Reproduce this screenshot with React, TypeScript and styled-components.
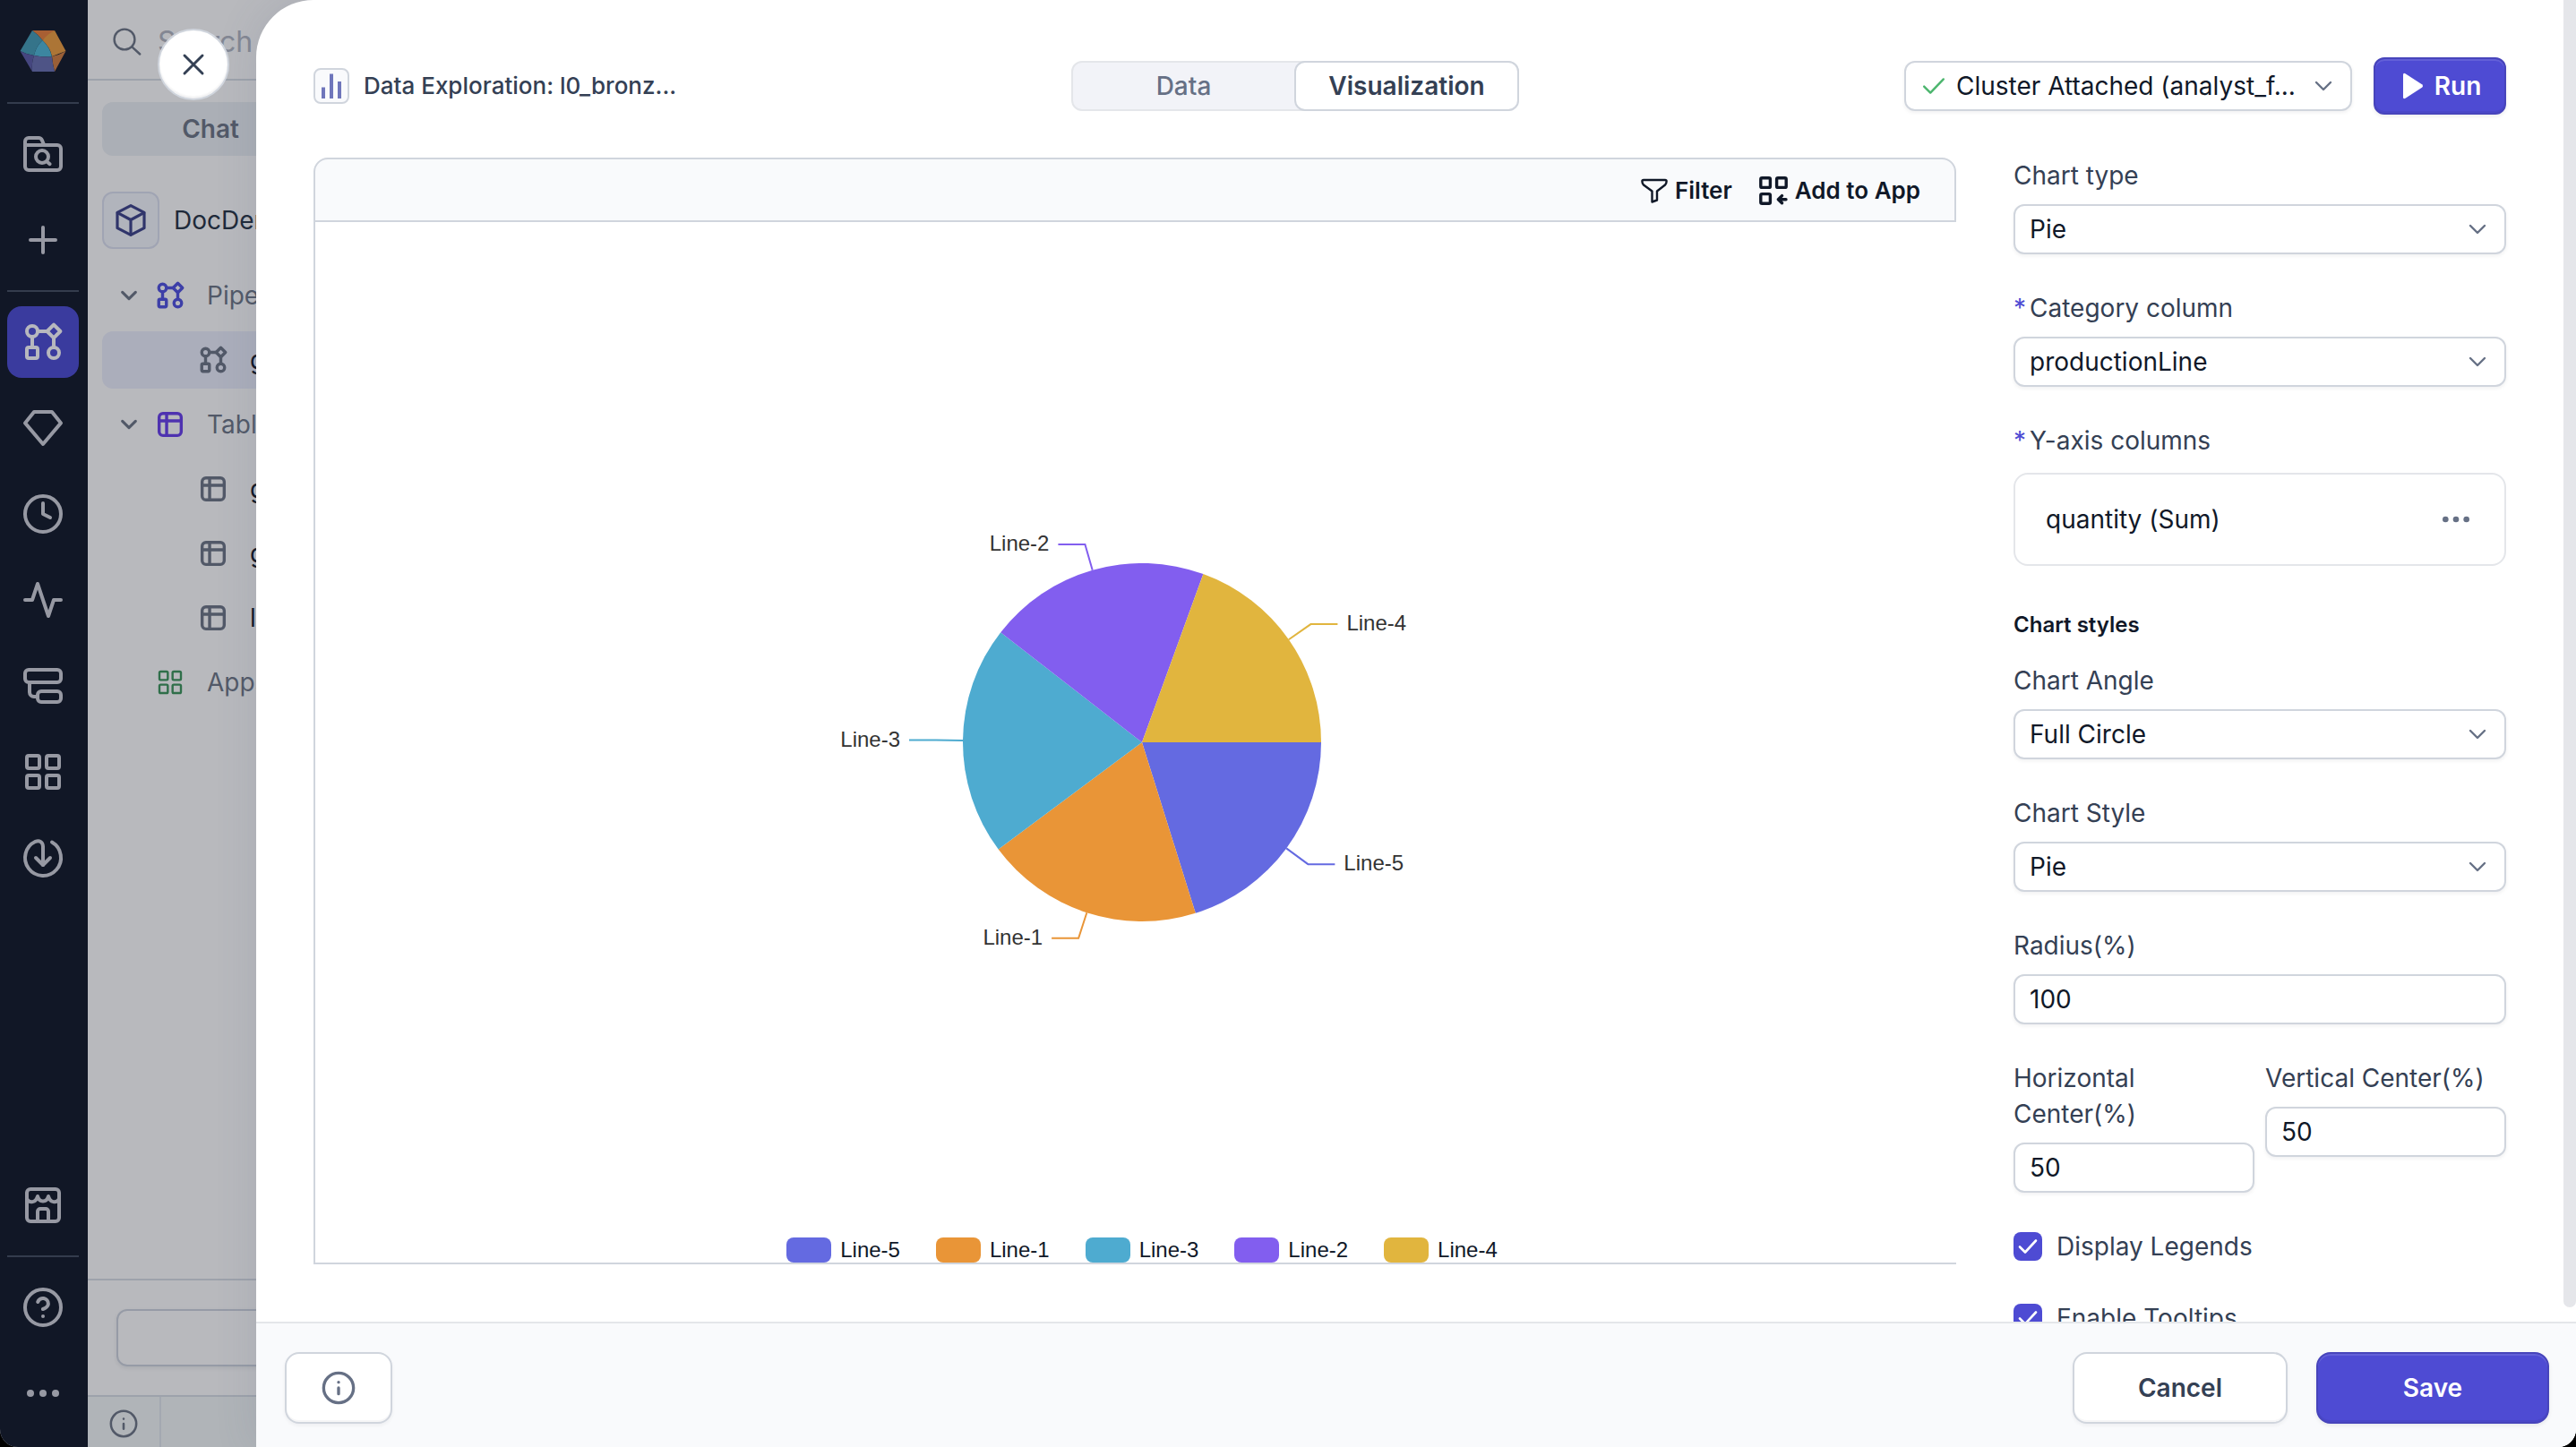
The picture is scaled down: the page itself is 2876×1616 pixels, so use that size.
import React, { useId } from "react";
import styled, { createGlobalStyle, css } from "styled-components";

const color = {
  primary: "#4e4bd3",
  ink: "#101828",
  text: "#344054",
  muted: "#667085",
  border: "#d0d5dd",
  line: "#e4e6ea",
  surface: "#f9fafc",
  rail: "#111726",
  railIcon: "#9799a3",
  railActive: "#3a3b9e",
  shade: "#b8b9bd",
  shadeLine: "#9da2ab",
  shadeText: "#525968",
};

const Global = createGlobalStyle`
  * { box-sizing: border-box; }
  html, body, #root { height: 100%; }
  body { margin: 0; background: #000; overflow: hidden; font-family: Inter, "Liberation Sans", sans-serif; font-size: 28px; line-height: 40px; color: ${color.ink}; }
  button, input, select { font: inherit; color: inherit; margin: 0; }
  ul { list-style: none; margin: 0; padding: 0; }
`;

/* ---------- icons ---------- */

interface IconProps {
  size?: number;
  stroke?: number;
}

const Icon = ({ size = 48, stroke = 2, children }: IconProps & { children: React.ReactNode }) => (
  <svg
    width={size}
    height={size}
    viewBox="0 0 24 24"
    fill="none"
    stroke="currentColor"
    strokeWidth={stroke}
    strokeLinecap="round"
    strokeLinejoin="round"
    aria-hidden="true"
  >
    {children}
  </svg>
);

const Logo = () => (
  <svg width="52" height="46" viewBox="22 33 52 46" aria-hidden="true">
    <path d="M36 33H61L47.5 44Q42 37 36 33Z" fill="#a85f33" />
    <path d="M61 33L73.5 56L58 62Q56 52 47.5 44Q53 37 61 33Z" fill="#ac7536" />
    <path d="M73.5 56L61 79Q59 72 58 62Q67 60 73.5 56Z" fill="#995f37" />
    <path d="M36 33Q42 37 47.5 44Q40 51 38 61Q30 60 22.5 56Z" fill="#35748a" />
    <path d="M47.5 44Q56 52 58 62.500Q48 63 38 61Q40 51 47.5 44Z" fill="#3c86a0" />
    <path d="M22.500 56Q30 60 38 61Q35 70 36 79Z" fill="#45467f" />
    <path d="M38 61Q48 63 58 62.500Q59 72 61 79H36Q35 70 38 61Z" fill="#4e5486" />
  </svg>
);

const FolderSearchIcon = () => (
  <Icon>
    <path d="M2 7h18a2 2 0 0 1 2 2v10a2 2 0 0 1-2 2H4a2 2 0 0 1-2-2V5a2 2 0 0 1 2-2h5.500a2 2 0 0 1 1.900 1.200L12.600 7" />
    <circle cx="11.500" cy="13.500" r="3.500" />
    <path d="M14.200 16.200L15.800 17.600" />
  </Icon>
);
const PlusIcon = () => (
  <Icon>
    <path d="M12 5v14M5 12h14" />
  </Icon>
);
const FlowIcon = (p: IconProps) => (
  <Icon {...p}>
    <circle cx="6" cy="6" r="3" />
    <path d="M18 2.300L21.700 6L18 9.700L14.300 6Z" />
    <rect x="3" y="15" width="6" height="6" rx="1" />
    <circle cx="18" cy="18" r="3" />
    <path d="M9 6h5.300M6 9v6M18 9.700V15" />
  </Icon>
);
const GemIcon = () => (
  <Icon>
    <path d="M7 3h10l5 6.200L12 21L2 9.200Z" />
  </Icon>
);
const ClockIcon = () => (
  <Icon>
    <circle cx="12" cy="12" r="10" />
    <path d="M12 6v6l4 2" />
  </Icon>
);
const ActivityIcon = () => (
  <Icon>
    <path d="M2 12h4L9 3l6 18 3-9h4" />
  </Icon>
);
const StackIcon = () => (
  <Icon>
    <rect x="2" y="3" width="20" height="7" rx="2" />
    <rect x="9" y="15" width="13" height="6" rx="2" />
    <path d="M4.500 10v5.500a2.500 2.500 0 0 0 2.500 2.500h2" />
  </Icon>
);
const GridIcon = (p: IconProps) => (
  <Icon {...p}>
    <rect x="3" y="3" width="7" height="7" rx="1" />
    <rect x="14" y="3" width="7" height="7" rx="1" />
    <rect x="3" y="14" width="7" height="7" rx="1" />
    <rect x="14" y="14" width="7" height="7" rx="1" />
  </Icon>
);
const IngestIcon = () => (
  <Icon>
    <path d="M17 3.300A10 10 0 1 1 7.800 2.900C10 2 12 3.200 12 5.800V16" />
    <path d="M8 12l4 4 4-4" />
  </Icon>
);
const StoreIcon = () => (
  <Icon>
    <rect x="3" y="3" width="18" height="18" rx="2" />
    <path d="M3 8.500c1.500 2.500 5 2.200 6-1.500c1 3.700 5 3.700 6 0c1 3.700 4.500 4 6 1.500" />
    <path d="M9 21v-5.500a1.500 1.500 0 0 1 1.500-1.500h3a1.500 1.500 0 0 1 1.500 1.500V21" />
  </Icon>
);
const HelpIcon = () => (
  <Icon>
    <circle cx="12" cy="12" r="10" />
    <path d="M9.100 9a3 3 0 0 1 5.830 1c0 2-3 3-3 3M12 17h.01" />
  </Icon>
);
const DotsIcon = ({ size = 48 }: IconProps) => (
  <svg width={size} height={size} viewBox="0 0 24 24" fill="currentColor" aria-hidden="true">
    <circle cx="5" cy="12" r="2" />
    <circle cx="12" cy="12" r="2" />
    <circle cx="19" cy="12" r="2" />
  </svg>
);
const TableIcon = () => (
  <Icon size={34} stroke={2.4}>
    <rect x="3.300" y="3.300" width="17.400" height="17.400" rx="3" />
    <path d="M9.200 3.500v17M3.500 9.200h17" />
  </Icon>
);
const ChevronIcon = (p: IconProps) => (
  <Icon size={24} stroke={2.4} {...p}>
    <path d="M4 8l8 8 8-8" />
  </Icon>
);
const SearchIcon = () => (
  <Icon size={36} stroke={1.6}>
    <circle cx="10" cy="10" r="7.600" />
    <path d="M15.600 15.600L21.500 21" />
  </Icon>
);
const CubeIcon = () => (
  <Icon size={40} stroke={1.9}>
    <path d="M12 2.200L21 6.800V17.200L12 21.800L3 17.200V6.800Z" />
    <path d="M3.200 7L12 11.700L20.800 7M12 11.700V21.600" />
  </Icon>
);
const InfoIcon = ({ size = 40, stroke = 2 }: IconProps) => (
  <Icon size={size} stroke={stroke}>
    <circle cx="12" cy="12" r="10" />
    <path d="M12 12v4M12 8.200h.01" />
  </Icon>
);
const CloseIcon = () => (
  <Icon size={32} stroke={2.2}>
    <path d="M4.500 4.500l15 15M19.500 4.500l-15 15" />
  </Icon>
);
const BarsIcon = () => (
  <svg width="24" height="28" viewBox="0 0 24 28" stroke="#6f76bb" strokeWidth="4" aria-hidden="true">
    <path d="M3 15.500V28M12 .5V28M21 9V28" />
  </svg>
);
const CheckIcon = () => (
  <Icon size={26} stroke={2.2}>
    <path d="M2 12.500L8.500 19L22 5" />
  </Icon>
);
const PlayIcon = () => (
  <svg width="24" height="30" viewBox="0 0 24 30" fill="#fff" aria-hidden="true">
    <path d="M1 2.500Q1 0 3.500 1.200L22 13.200Q24 15 22 16.800L3.500 28.800Q1 30 1 27.500Z" />
  </svg>
);
const FilterIcon = () => (
  <svg width="30" height="28" viewBox="0 0 30 28" fill="none" stroke="currentColor" strokeWidth="2.400" strokeLinejoin="round" aria-hidden="true">
    <path d="M3 2H27Q28.600 2 28.600 3.600Q28.600 6 27 7.500L18 14.500V24.500L12.500 26.500V14.500L3 7.500Q1.400 6 1.400 3.600Q1.400 2 3 2Z" />
  </svg>
);
const AddToAppIcon = () => (
  <svg width="32" height="32" viewBox="0 0 32 32" fill="none" stroke="currentColor" strokeWidth="3.400" strokeLinecap="round" strokeLinejoin="round" aria-hidden="true">
    <rect x="1.800" y="1.800" width="10.600" height="10.600" rx="1.500" />
    <rect x="19.600" y="1.800" width="10.600" height="10.600" rx="1.500" />
    <rect x="1.800" y="19.600" width="10.600" height="10.600" rx="1.500" />
    <path d="M30 25.700H22M25.500 21.600L21.400 25.700L25.500 29.800" />
  </svg>
);

/* ---------- page behind the drawer ---------- */

const Page = styled.div`
  position: relative;
  display: flex;
  height: 100vh;
  overflow: hidden;
  border-radius: 0 0 20px 20px;
  background: ${color.shade};
`;

const Rail = styled.nav`
  display: flex;
  flex-direction: column;
  gap: 16px;
  width: 98px;
  padding: 16px 10px 20px 8px;
  background: ${color.rail};
`;
const LogoLink = styled.a`
  display: grid;
  place-items: center;
  height: 82px;
`;
const RailLine = styled.hr`
  width: 100%;
  height: 2px;
  margin: 0;
  border: 0;
  background: #343c4d;
`;
const RailButton = styled.button<{ $active?: boolean }>`
  display: grid;
  place-items: center;
  height: 80px;
  padding: 0;
  border: 0;
  border-radius: 16px;
  color: ${(p) => (p.$active ? "#b7b8be" : color.railIcon)};
  background: ${(p) => (p.$active ? color.railActive : "transparent")};
`;
const Spacer = styled.div`
  flex: 1;
`;

const Browser = styled.aside`
  display: flex;
  flex-direction: column;
  width: 516px;
`;
const SearchBar = styled.label`
  display: flex;
  align-items: center;
  gap: 16px;
  height: 90px;
  padding: 6px 26px 0;
  border-bottom: 2px solid ${color.shadeLine};
  color: ${color.shadeText};
`;
const SearchInput = styled.input`
  flex: 1;
  min-width: 0;
  padding: 0;
  border: 0;
  background: none;
  font-size: 32px;
  &::placeholder {
    color: #838793;
    opacity: 1;
  }
`;
const ModeTabs = styled.div`
  display: flex;
  margin: 24px 16px 0;
  border-radius: 12px;
  background: #abafb6;
`;
const ModeTab = styled.button`
  width: 50%;
  height: 60px;
  border: 0;
  background: none;
  color: ${color.shadeText};
  font-weight: 600;
`;
const Project = styled.div`
  display: flex;
  align-items: center;
  gap: 16px;
  margin: 40px 16px 20px;
  color: #1f2a3a;
`;
const ProjectBadge = styled.span`
  display: grid;
  place-items: center;
  width: 64px;
  height: 64px;
  border: 2px solid #a0a4b3;
  border-radius: 12px;
  color: #30356b;
  background: #b1b4bc;
`;
const Tree = styled.ul`
  display: flex;
  flex-direction: column;
  gap: 8px;
  padding: 0 16px;
`;
const TreeRow = styled.li<{ $child?: boolean; $selected?: boolean }>`
  display: grid;
  grid-template-columns: ${(p) => (p.$child ? "58px" : "41px 58px")} 1fr;
  align-items: center;
  height: 64px;
  padding-left: ${(p) => (p.$child ? "107px" : "18px")};
  border-radius: 12px;
  white-space: nowrap;
  color: ${(p) => (p.$child ? "#111726" : color.shadeText)};
  background: ${(p) => (p.$selected ? "#abaebb" : "transparent")};
`;
const Glyph = styled.span<{ $tone?: string; $small?: boolean }>`
  display: flex;
  justify-content: center;
  width: ${(p) => (p.$small ? "24px" : "34px")};
  color: ${(p) => p.$tone ?? color.shadeText};
`;
const BrowserAction = styled.div`
  display: flex;
  padding: 32px;
  border-top: 2px solid ${color.shadeLine};
`;
const ActionButton = styled.button`
  flex: 1;
  height: 64px;
  border: 2px solid #969ba6;
  border-radius: 12px;
  background: none;
  box-shadow: 0 2px 4px rgba(16, 24, 40, 0.08);
`;
const StatusBar = styled.div`
  display: flex;
  height: 58px;
  border-top: 2px solid ${color.shadeLine};
  background: #b0b4b8;
`;
const StatusButton = styled.button`
  display: grid;
  place-items: center;
  width: 82px;
  padding: 4px 0 0;
  border: 0;
  border-right: 2px solid #a3a8b1;
  color: ${color.shadeText};
  background: none;
`;

/* ---------- drawer ---------- */

const Drawer = styled.section`
  position: absolute;
  inset: 0 0 0 286px;
  display: flex;
  flex-direction: column;
  border-top-left-radius: 64px;
  background: #fff;
  box-shadow: 0 0 48px rgba(80, 90, 130, 0.14);
`;
const CloseButton = styled.button`
  position: absolute;
  top: 32px;
  left: -110px;
  display: grid;
  place-items: center;
  width: 80px;
  height: 80px;
  padding: 0;
  border: 2px solid ${color.border};
  border-radius: 50%;
  color: ${color.text};
  background: #fff;
  box-shadow: inset 0 -2px 2px rgba(16, 24, 40, 0.06);
`;
const DrawerBody = styled.div`
  flex: 1;
  min-height: 0;
  display: flex;
`;
const ScrollArea = styled.div`
  flex: 1;
  min-width: 0;
  display: flex;
  flex-direction: column;
  overflow: hidden;
  padding: 64px 64px 0;
`;
const ScrollThumb = styled.div`
  width: 14px;
  margin-bottom: 16px;
  border-radius: 0 0 7px 7px;
  background: #e5e6ea;
`;
const Header = styled.header`
  display: flex;
  align-items: center;
  justify-content: space-between;
  margin-bottom: 48px;
`;
const Title = styled.h1`
  display: flex;
  align-items: center;
  gap: 16px;
  width: 416px;
  margin: 0;
  font-size: 26px;
  font-weight: 500;
  white-space: nowrap;
  color: ${color.text};
`;
const TitleBadge = styled.span`
  display: flex;
  align-items: flex-end;
  justify-content: center;
  width: 40px;
  height: 40px;
  padding-bottom: 4px;
  border: 2px solid ${color.border};
  border-radius: 8px;
  background: ${color.surface};
`;
const Segmented = styled.div`
  display: flex;
  width: 500px;
  height: 56px;
  border: 2px solid ${color.line};
  border-radius: 12px;
  background: #f2f3f8;
`;
const Segment = styled.button<{ $active?: boolean }>`
  flex: 1;
  padding: 0;
  border: 0;
  border-radius: 12px;
  background: none;
  font-weight: 500;
  color: ${color.muted};
  ${(p) =>
    p.$active &&
    css`
      margin: -2px -2px -2px 0;
      border: 2px solid ${color.border};
      background: #fff;
      font-weight: 600;
      color: ${color.text};
    `}
`;
const HeaderActions = styled.div`
  display: flex;
  align-items: center;
  justify-content: flex-end;
  gap: 24px;
`;

const primaryFill = css`
  border: 2px solid #4744bb;
  color: #fff;
  background: ${color.primary};
  box-shadow: inset 0 2px 0 rgba(255, 255, 255, 0.12), inset 0 -2px 0 rgba(16, 24, 40, 0.06),
    0 2px 4px rgba(16, 24, 40, 0.08);
`;
const RunButton = styled.button`
  display: flex;
  align-items: center;
  justify-content: center;
  gap: 12px;
  width: 148px;
  height: 64px;
  padding: 0 0 0 4px;
  border-radius: 12px;
  font-weight: 600;
  ${primaryFill}
`;

const fieldBox = css`
  width: 100%;
  height: 56px;
  padding: 0 16px;
  border: 2px solid ${color.border};
  border-radius: 12px;
  background: #fff;
  box-shadow: 0 2px 4px rgba(16, 24, 40, 0.06);
`;
const SelectWrap = styled.div<{ $width?: string }>`
  display: grid;
  align-items: center;
  width: ${(p) => p.$width ?? "100%"};
  > * {
    grid-area: 1 / 1;
  }
`;
const SelectBox = styled.select<{ $lead?: boolean }>`
  ${fieldBox}
  appearance: none;
  padding-left: ${(p) => (p.$lead ? "56px" : "16px")};
`;
const SelectMark = styled.span<{ $side: "start" | "end"; $tone: string }>`
  display: flex;
  justify-self: ${(p) => p.$side};
  margin: 0 20px;
  pointer-events: none;
  color: ${(p) => p.$tone};
`;
const TextBox = styled.input`
  ${fieldBox}
`;

const Columns = styled.div`
  display: flex;
  gap: 64px;
`;
const ChartPanel = styled.div`
  flex: 1;
  min-width: 0;
  height: calc(100vh - 380px);
  display: flex;
  flex-direction: column;
`;
const ChartToolbar = styled.div`
  display: flex;
  align-items: center;
  justify-content: flex-end;
  gap: 30px;
  height: 72px;
  padding: 2px 38px 0;
  border: 2px solid ${color.border};
  border-radius: 16px 16px 0 0;
  background: ${color.surface};
`;
const ToolButton = styled.button`
  display: flex;
  align-items: center;
  gap: 8px;
  padding: 0;
  border: 0;
  background: none;
  font-size: 26px;
  font-weight: 600;
`;
const ChartBody = styled.div`
  flex: 1;
  display: grid;
  padding-left: 14px;
  border: solid ${color.border};
  border-width: 0 0 2px 2px;
  font-family: "Liberation Sans", Arial, sans-serif;
  font-size: 24px;
  line-height: 28px;
`;
const PieSvg = styled.svg`
  grid-area: 1 / 1;
  place-self: center;
  overflow: visible;
`;
const Legend = styled.ul`
  grid-area: 1 / 1;
  align-self: end;
  justify-self: center;
  display: flex;
  gap: 40px;
`;
const LegendItem = styled.li`
  display: flex;
  gap: 10px;
`;
const Swatch = styled.span<{ $fill: string }>`
  width: 50px;
  height: 28px;
  border-radius: 8px;
  background: ${(p) => p.$fill};
`;

const Settings = styled.form`
  width: 550px;
  display: flex;
  flex-direction: column;
  gap: 40px;
  color: ${color.ink};
`;
const Field = styled.div<{ $loose?: boolean }>`
  display: flex;
  flex-direction: column;
  gap: ${(p) => (p.$loose ? "16px" : "12px")};
  min-width: 0;
`;
const Label = styled.label`
  color: ${color.text};
`;
const Required = styled.span`
  margin-right: 4px;
  color: ${color.primary};
`;
const ColumnCard = styled.div`
  display: flex;
  align-items: center;
  justify-content: space-between;
  height: 104px;
  padding: 0 34px;
  border: 2px solid ${color.line};
  border-radius: 16px;
`;
const IconButton = styled.button`
  display: flex;
  padding: 0;
  border: 0;
  color: ${color.muted};
  background: none;
`;
const StyleGroup = styled.div`
  display: flex;
  flex-direction: column;
  gap: 16px;
`;
const GroupTitle = styled.h2`
  margin: 0;
  font-size: 24px;
  line-height: 52px;
  font-weight: 600;
`;
const FieldRow = styled.div`
  display: grid;
  grid-template-columns: 1fr 1fr;
  align-items: start;
  gap: 12px;
`;
const CheckRow = styled.label`
  display: flex;
  align-items: center;
  gap: 16px;
  color: ${color.text};
`;
const CheckBox = styled.input`
  appearance: none;
  width: 32px;
  height: 32px;
  border-radius: 8px;
  background: ${color.primary};
`;
const CheckFrame = styled.span`
  display: grid;
  place-items: center;
  > * {
    grid-area: 1 / 1;
  }
  > svg {
    color: #fff;
    pointer-events: none;
  }
`;

const Footer = styled.footer`
  display: flex;
  gap: 32px;
  height: 140px;
  padding: 32px 30px 0 32px;
  border-top: 2px solid ${color.line};
  background: ${color.surface};
`;
const FooterButton = styled.button<{ $width: number; $primary?: boolean; $muted?: boolean }>`
  display: grid;
  place-items: center;
  width: ${(p) => p.$width}px;
  height: 80px;
  padding: 0;
  border-radius: 16px;
  font-weight: 600;
  ${(p) =>
    p.$primary
      ? primaryFill
      : css`
          border: 2px solid ${color.border};
          color: ${p.$muted ? color.muted : color.text};
          background: #fff;
          box-shadow: inset 0 -2px 0 rgba(16, 24, 40, 0.04), 0 2px 4px rgba(16, 24, 40, 0.05);
        `}
`;

/* ---------- pie chart ---------- */

const slices = [
  { name: "Line-5", fill: "#646ae1", sweep: 72.6 },
  { name: "Line-1", fill: "#e99537", sweep: 70.7 },
  { name: "Line-3", fill: "#4eabd0", sweep: 74.6 },
  { name: "Line-2", fill: "#825eef", sweep: 72.1 },
  { name: "Line-4", fill: "#e1b53e", sweep: 70 },
];

const RADIUS = 200;
const LEADER = 30;

const polar = (r: number, deg: number) => {
  const a = (deg * Math.PI) / 180;
  return [r * Math.cos(a), r * Math.sin(a)];
};

const Pie = () => {
  let start = 0;
  return (
    <PieSvg width="720" height="520" viewBox="-360 -260 720 520" role="img" aria-label="quantity (Sum)">
      {slices.map((s) => {
        const end = start + s.sweep;
        const mid = (start + end) / 2;
        const [x0, y0] = polar(RADIUS, start);
        const [x1, y1] = polar(RADIUS, end);
        const [lx, ly] = polar(RADIUS, mid);
        const [mx, my] = polar(RADIUS + LEADER, mid);
        const dir = mx < 0 ? -1 : 1;
        start = end;
        return (
          <g key={s.name}>
            <path d={`M0 0L${x0} ${y0}A${RADIUS} ${RADIUS} 0 0 1 ${x1} ${y1}Z`} fill={s.fill} />
            <path
              d={`M${lx} ${ly}L${mx} ${my}H${mx + dir * LEADER}`}
              fill="none"
              stroke={s.fill}
              strokeWidth="2"
            />
            <text x={mx + dir * (LEADER + 10)} y={my + 7} textAnchor={dir < 0 ? "end" : "start"} fill="#333">
              {s.name}
            </text>
          </g>
        );
      })}
    </PieSvg>
  );
};

/* ---------- form parts ---------- */

const SelectField = ({ label, value, required }: { label: string; value: string; required?: boolean }) => {
  const id = useId();
  return (
    <Field>
      <Label htmlFor={id}>
        {required && <Required>*</Required>}
        {label}
      </Label>
      <SelectWrap>
        <SelectBox id={id} defaultValue={value}>
          <option>{value}</option>
        </SelectBox>
        <SelectMark $side="end" $tone={color.muted}>
          <ChevronIcon />
        </SelectMark>
      </SelectWrap>
    </Field>
  );
};

const TextField = ({ label, value }: { label: string; value: string }) => {
  const id = useId();
  return (
    <Field>
      <Label htmlFor={id}>{label}</Label>
      <TextBox id={id} defaultValue={value} />
    </Field>
  );
};

const CheckField = ({ label }: { label: string }) => (
  <CheckRow>
    <CheckFrame>
      <CheckBox type="checkbox" defaultChecked />
      <Icon size={24} stroke={2.6}>
        <path d="M3 12.500L9 18.500L21 5.500" />
      </Icon>
    </CheckFrame>
    {label}
  </CheckRow>
);

const TreeGroup = ({ label, icon, tone, leaf }: { label: string; icon: React.ReactNode; tone: string; leaf?: boolean }) => (
  <TreeRow>
    <Glyph $small>{!leaf && <ChevronIcon size={22} stroke={3.4} />}</Glyph>
    <Glyph $tone={tone}>{icon}</Glyph>
    {label}
  </TreeRow>
);

const TreeLeaf = ({ label, icon, selected }: { label: string; icon: React.ReactNode; selected?: boolean }) => (
  <TreeRow $child $selected={selected}>
    <Glyph>{icon}</Glyph>
    {label}
  </TreeRow>
);

const railItems = [
  { name: "Models", icon: <GemIcon /> },
  { name: "Schedules", icon: <ClockIcon /> },
  { name: "Activity", icon: <ActivityIcon /> },
  { name: "Clusters", icon: <StackIcon /> },
  { name: "Apps", icon: <GridIcon /> },
  { name: "Ingest", icon: <IngestIcon /> },
];

export default function App() {
  return (
    <>
      <Global />
      <Page>
        <Rail>
          <LogoLink href="#" aria-label="Home">
            <Logo />
          </LogoLink>
          <RailLine />
          <RailButton aria-label="Browse">
            <FolderSearchIcon />
          </RailButton>
          <RailButton aria-label="New">
            <PlusIcon />
          </RailButton>
          <RailLine />
          <RailButton $active aria-label="Pipelines">
            <FlowIcon />
          </RailButton>
          {railItems.map((item) => (
            <RailButton key={item.name} aria-label={item.name}>
              {item.icon}
            </RailButton>
          ))}
          <Spacer />
          <RailButton aria-label="Store">
            <StoreIcon />
          </RailButton>
          <RailLine />
          <RailButton aria-label="Help">
            <HelpIcon />
          </RailButton>
          <RailButton aria-label="More">
            <DotsIcon />
          </RailButton>
        </Rail>

        <Browser>
          <SearchBar>
            <SearchIcon />
            <SearchInput placeholder="Search" aria-label="Search" />
          </SearchBar>
          <ModeTabs>
            <ModeTab>Chat</ModeTab>
          </ModeTabs>
          <Project>
            <ProjectBadge>
              <CubeIcon />
            </ProjectBadge>
            DocDemo
          </Project>
          <Tree>
            <TreeGroup label="Pipelines" icon={<FlowIcon size={34} stroke={2.4} />} tone="#3d3fa8" />
            <TreeLeaf label="gold" icon={<FlowIcon size={34} stroke={2.4} />} selected />
            <TreeGroup label="Tables" icon={<TableIcon />} tone="#4e32b0" />
            <TreeLeaf label="gold" icon={<TableIcon />} />
            <TreeLeaf label="gold" icon={<TableIcon />} />
            <TreeLeaf label="l0_bronze" icon={<TableIcon />} />
            <TreeGroup label="Apps" icon={<GridIcon size={32} stroke={1.8} />} tone="#2f6f4a" leaf />
          </Tree>
          <Spacer />
          <BrowserAction>
            <ActionButton aria-label="Add" />
          </BrowserAction>
          <StatusBar>
            <StatusButton aria-label="Information">
              <InfoIcon size={34} stroke={1.8} />
            </StatusButton>
          </StatusBar>
        </Browser>

        <Drawer>
          <CloseButton aria-label="Close">
            <CloseIcon />
          </CloseButton>
          <DrawerBody>
            <ScrollArea>
              <Header>
                <Title>
                  <TitleBadge>
                    <BarsIcon />
                  </TitleBadge>
                  Data Exploration: l0_bronz...
                </Title>
                <Segmented>
                  <Segment>Data</Segment>
                  <Segment $active>Visualization</Segment>
                </Segmented>
                <HeaderActions>
                  <SelectWrap $width="500px">
                    <SelectBox $lead aria-label="Cluster">
                      <option>Cluster Attached (analyst_f...</option>
                    </SelectBox>
                    <SelectMark $side="start" $tone="#4bb56d">
                      <CheckIcon />
                    </SelectMark>
                    <SelectMark $side="end" $tone={color.muted}>
                      <ChevronIcon />
                    </SelectMark>
                  </SelectWrap>
                  <RunButton>
                    <PlayIcon />
                    Run
                  </RunButton>
                </HeaderActions>
              </Header>

              <Columns>
                <ChartPanel>
                  <ChartToolbar>
                    <ToolButton>
                      <FilterIcon />
                      Filter
                    </ToolButton>
                    <ToolButton>
                      <AddToAppIcon />
                      Add to App
                    </ToolButton>
                  </ChartToolbar>
                  <ChartBody>
                    <Pie />
                    <Legend>
                      {slices.map((s) => (
                        <LegendItem key={s.name}>
                          <Swatch $fill={s.fill} />
                          {s.name}
                        </LegendItem>
                      ))}
                    </Legend>
                  </ChartBody>
                </ChartPanel>

                <Settings>
                  <SelectField label="Chart type" value="Pie" />
                  <SelectField label="Category column" value="productionLine" required />
                  <Field $loose>
                    <Label as="span">
                      <Required>*</Required>
                      Y-axis columns
                    </Label>
                    <ColumnCard>
                      quantity (Sum)
                      <IconButton type="button" aria-label="Column options">
                        <DotsIcon size={40} />
                      </IconButton>
                    </ColumnCard>
                  </Field>
                  <StyleGroup>
                    <GroupTitle>Chart styles</GroupTitle>
                    <SelectField label="Chart Angle" value="Full Circle" />
                  </StyleGroup>
                  <SelectField label="Chart Style" value="Pie" />
                  <TextField label="Radius(%)" value="100" />
                  <FieldRow>
                    <TextField label="Horizontal Center(%)" value="50" />
                    <TextField label="Vertical Center(%)" value="50" />
                  </FieldRow>
                  <CheckField label="Display Legends" />
                  <CheckField label="Enable Tooltips" />
                </Settings>
              </Columns>
            </ScrollArea>
            <ScrollThumb />
          </DrawerBody>
          <Footer>
            <FooterButton $width={120} $muted aria-label="Information">
              <InfoIcon size={40} stroke={2} />
            </FooterButton>
            <Spacer />
            <FooterButton $width={240}>Cancel</FooterButton>
            <FooterButton $width={260} $primary>
              Save
            </FooterButton>
          </Footer>
        </Drawer>
      </Page>
    </>
  );
}
